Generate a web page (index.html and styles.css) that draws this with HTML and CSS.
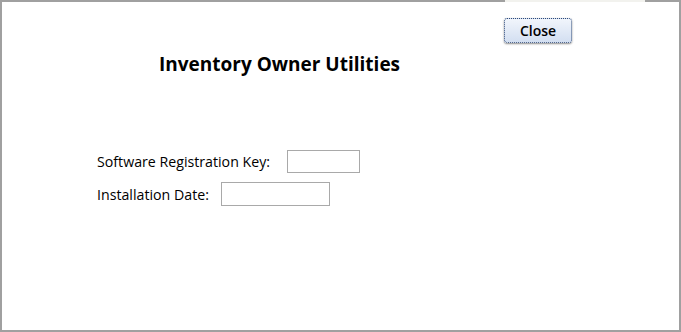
FILE: index.html
```html
<!DOCTYPE html>
<html>
<head>
    <title>Inventory Owner Utilities</title>
    <link rel="stylesheet" href="styles.css">
</head>
<body>
    <!-- Window frame with a gap in the top edge -->
    <div class="frame">
        <div class="top-edge">
            <div class="edge-grey edge-left"></div>
            <div class="edge-light"></div>
            <div class="edge-grey edge-right"></div>
        </div>
        <div class="panel">
            <!-- Close button row -->
            <div class="toolbar">
                <button class="close-btn" type="button">Close</button>
            </div>

            <!-- Page heading -->
            <h1 class="title">Inventory Owner Utilities</h1>

            <!-- Owner fields -->
            <form class="fields">
                <div class="field-row">
                    <label for="regkey">Software Registration Key:</label>
                    <input type="text" id="regkey" class="input-key">
                </div>
                <div class="field-row field-row-date">
                    <label for="instdate">Installation Date:</label>
                    <input type="text" id="instdate" class="input-date">
                </div>
            </form>
        </div>
    </div>
</body>
</html>
```

FILE: styles.css
```css
/* Reset page and set base font */
body {
    margin: 0;
    font-family: "Open Sans", "Noto Sans", Arial, sans-serif;
    color: #000;
    background-color: #fff;
}
/* Outer window frame */
.frame {
    width: 681px;
    height: 332px;
    display: flex;
    flex-direction: column;
}
/* Top edge made of three segments */
.top-edge {
    display: flex;
    height: 2px;
}
.edge-grey {
    background-color: #a0a0a0;
}
.edge-left {
    width: 505px;
}
.edge-light {
    width: 140px;
    background-color: #f2f2ee;
}
.edge-right {
    flex: 1;
}
/* Main white panel */
.panel {
    flex: 1;
    border: 2px solid #a0a0a0;
    border-top: none;
}
/* Row holding the close button */
.toolbar {
    display: flex;
    padding: 16px 0 0 502px;
}
.close-btn {
    width: 68px;
    height: 25px;
    padding: 0;
    font-family: inherit;
    font-size: 14px;
    font-weight: 600;
    color: #000;
    background: linear-gradient(#f1f5fc, #d3dff1);
    border: 1px dotted #2f4a78;
    border-radius: 3px;
    box-shadow: 0 1px 2px rgba(0, 0, 0, 0.45);
}
/* Heading */
.title {
    margin: 7px 0 0 157px;
    font-size: 19px;
    font-weight: 700;
    line-height: 28px;
}
/* Form rows */
.fields {
    margin: 72px 0 0 95px;
    display: flex;
    flex-direction: column;
    gap: 9px;
}
.field-row {
    display: flex;
    align-items: center;
    gap: 17px;
    font-size: 14.2px;
}
.field-row-date {
    gap: 12px;
}
input {
    box-sizing: border-box;
    margin: 0;
    border: 1px solid #a9a9a9;
    height: 23px;
}
.input-key {
    width: 73px;
}
.input-date {
    width: 109px;
    height: 24px;
}
```
